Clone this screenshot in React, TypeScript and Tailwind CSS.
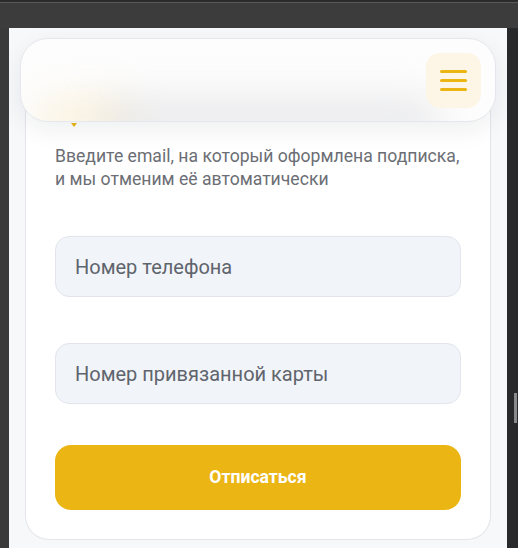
import { useState } from 'react';

function Header() {
  return (
    <div className="absolute left-[11px] right-[11px] top-[10px] h-[84px] rounded-[28px] border border-[#e6e7ec] bg-[#fdfdfd] shadow-[0_8px_24px_rgba(17,24,39,0.07)] overflow-hidden flex items-center justify-end pr-[14px]">
      <div className="absolute left-[14px] bottom-[-24px] w-[100px] h-[50px] rounded-full bg-[#fbe7bd] blur-[18px] opacity-40" />
      <div className="absolute left-[80px] bottom-[-20px] w-[340px] h-[42px] rounded-full bg-[#d4d5d9] blur-[20px] opacity-50" />
      <button type="button" className="relative w-[55px] h-[55px] rounded-[14px] bg-[#fdf5e6] flex flex-col items-center justify-center gap-[6px]">
        <span className="block w-[27px] h-[3px] rounded-full bg-[#ebb513]" />
        <span className="block w-[27px] h-[3px] rounded-full bg-[#ebb513]" />
        <span className="block w-[27px] h-[3px] rounded-full bg-[#ebb513]" />
      </button>
    </div>
  );
}

export default function App() {
  const [phone, setPhone] = useState('');
  const [card, setCard] = useState('');

  return (
    <div className="w-[518px] h-[548px] bg-[#3c3c3c] flex flex-col overflow-hidden" style={{ fontFamily: 'Roboto, "Noto Sans", sans-serif' }}>
      {/* browser chrome */}
      <div className="h-[28px] shrink-0 bg-[#3c3c3c] border-t-2 border-t-[#2b2b2b]">
        <div className="h-px bg-[#5a5a5a]" />
      </div>
      <div className="flex flex-1 min-h-0">
        <div className="w-[9px] shrink-0 bg-[#3a3a3a]" />
        <div className="relative flex-1 overflow-hidden bg-[#f7f8fa]">
          <div className="mx-[16px] mt-[30px] rounded-[24px] border border-t-0 border-[#e3e5ea] bg-white px-[29px] pt-[38px] pb-[29px]">
            {/* title row, hidden under the header except the tip of its icon */}
            <div className="relative h-[28px]">
              <span className="absolute left-[16px] top-[27px] w-0 h-0 border-l-[3px] border-r-[3px] border-t-[4px] border-l-transparent border-r-transparent border-t-[#ebb513]" />
            </div>
            <p className="mt-[21px] text-[17.6px] leading-[23px] text-[#6b6e74]">
              Введите email, на который оформлена подписка,
              <br />
              и мы отменим её автоматически
            </p>
            <input
              value={phone}
              onChange={(e) => setPhone(e.target.value)}
              placeholder="Номер телефона"
              className="mt-[45px] block w-full h-[61px] rounded-[14px] border border-[#e2e6ec] bg-[#f1f4f8] px-[19px] text-[20px] text-[#374151] placeholder:text-[#5f646d] outline-none"
            />
            <input
              value={card}
              onChange={(e) => setCard(e.target.value)}
              placeholder="Номер привязанной карты"
              className="mt-[46px] block w-full h-[61px] rounded-[14px] border border-[#e2e6ec] bg-[#f1f4f8] px-[19px] text-[20px] text-[#374151] placeholder:text-[#5f646d] outline-none"
            />
            <button type="button" className="mt-[41px] block w-full h-[65px] rounded-[16px] bg-[#ebb513] text-white text-[17.6px] font-bold">
              Отписаться
            </button>
          </div>
          <Header />
        </div>
        <div className="w-[11px] shrink-0 bg-[#27292b] relative">
          <div className="absolute right-[1px] top-[365px] w-[3px] h-[30px] bg-[#8a8a8a]" />
        </div>
      </div>
    </div>
  );
}
